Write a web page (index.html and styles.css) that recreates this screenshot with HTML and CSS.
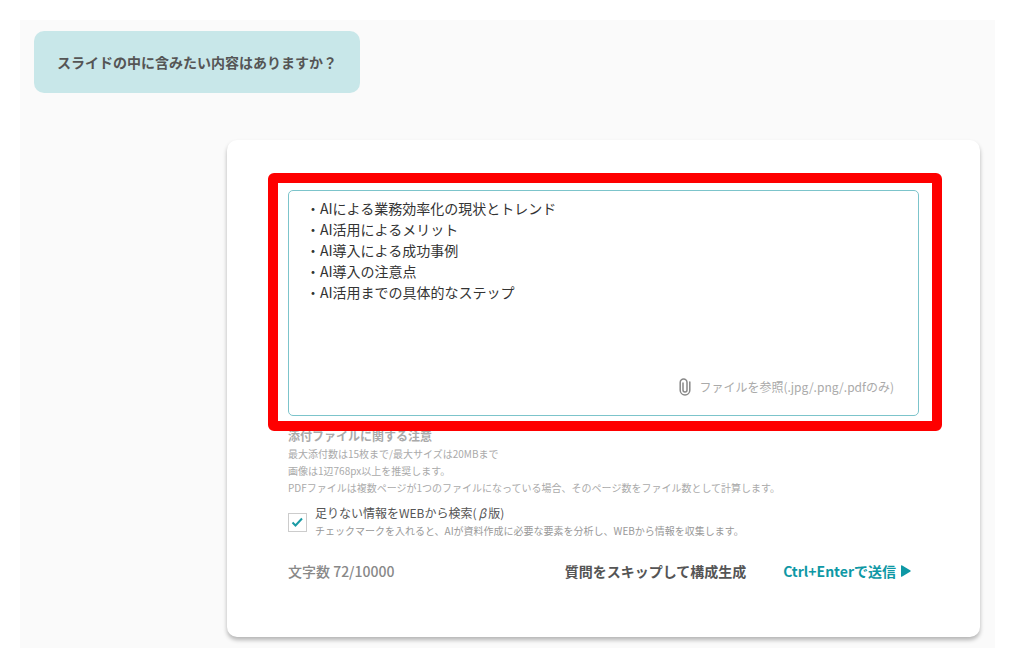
FILE: index.html
```
<!DOCTYPE html>
<html lang="ja">
<head>
  <meta charset="UTF-8">
  <meta name="viewport" content="width=device-width, initial-scale=1">
  <title>スライド構成</title>
  <link rel="stylesheet" href="styles.css">
</head>
<body>
  <main class="chat">
    <p class="bubble" id="question">スライドの中に含みたい内容はありますか？</p>
    <form class="card">
      <div class="field">
        <textarea class="answer" rows="5" aria-labelledby="question">・AIによる業務効率化の現状とトレンド
・AI活用によるメリット
・AI導入による成功事例
・AI導入の注意点
・AI活用までの具体的なステップ</textarea>
        <label class="file" for="file">
          <svg class="clip" width="12" height="18" viewBox="0 0 12 18" fill="none" stroke="currentColor" stroke-width="1.5" stroke-linecap="round">
            <path d="M10.8 4v8.2a4.8 4.8 0 0 1-9.6 0V4.4a3.4 3.4 0 0 1 6.8 0v7.6a2 2 0 0 1-4 0V5"/>
          </svg>
          <span>ファイルを参照(.jpg/.png/.pdfのみ)</span>
        </label>
        <input class="file-input" id="file" type="file" accept=".jpg,.png,.pdf" multiple>
        <div class="highlight"></div>
      </div>
      <div class="notes">
        <h2 class="notes-title">添付ファイルに関する注意</h2>
        <p>最大添付数は15枚まで/最大サイズは20MBまで</p>
        <p>画像は1辺768px以上を推奨します。</p>
        <p>PDFファイルは複数ページが1つのファイルになっている場合、そのページ数をファイル数として計算します。</p>
      </div>
      <div class="search">
        <input class="check" id="web-search" type="checkbox" checked>
        <label class="search-label" for="web-search">
          <span class="search-title">足りない情報をWEBから検索(<i class="beta">β</i>版)</span>
          <span class="search-help">チェックマークを入れると、AIが資料作成に必要な要素を分析し、WEBから情報を収集します。</span>
        </label>
      </div>
      <div class="footer">
        <span class="count">文字数 72/10000</span>
        <button class="btn" type="button">質問をスキップして構成生成</button>
        <button class="btn btn-send" type="submit">
          Ctrl+Enterで送信
          <svg width="10" height="12" viewBox="0 0 10 12" fill="currentColor"><path d="M0 0.8Q0 0 0.8 0.3L9.5 5.4Q10 6 9.5 6.6L0.8 11.7Q0 12 0 11.2Z"/></svg>
        </button>
      </div>
    </form>
  </main>
</body>
</html>
```

FILE: styles.css
```
* {
  box-sizing: border-box;
}
body {
  margin: 0;
  padding: 20px 29px 19px 20px;
  background: #fff;
  color: #555;
  font-family: "Noto Sans CJK JP", sans-serif;
  font-size: 14px;
}
p, h2 {
  margin: 0;
}
.chat {
  display: flex;
  flex-direction: column;
  align-items: flex-start;
  padding: 11px 15px 11px 14px;
  background: #fafafa;
}
.bubble {
  padding: 21px 23px;
  border-radius: 10px;
  background: #c8e7e9;
  line-height: 20px;
  font-weight: 700;
}
.card {
  align-self: stretch;
  margin: 47px 0 0 193px;
  padding: 50px 61px 56px;
  border-radius: 10px;
  background: #fff;
  box-shadow: 0 3px 4px rgba(0, 0, 0, 0.28);
}
.field {
  position: relative;
  display: flex;
  flex-direction: column;
  min-height: 226px;
  border: 1px solid #7cc4cb;
  border-radius: 5px;
}
.answer {
  flex: 1;
  width: 100%;
  padding: 7px 17px;
  border: 0;
  outline: 0;
  resize: none;
  background: none;
  color: #333;
  font: inherit;
  line-height: 21px;
}
.file {
  display: flex;
  align-items: center;
  align-self: flex-end;
  gap: 8px;
  padding: 0 24px 19px 0;
  color: #aaa;
  font-size: 12px;
  line-height: 18px;
  cursor: pointer;
}
.clip {
  color: #888;
}
.file-input {
  position: absolute;
  width: 1px;
  height: 1px;
  opacity: 0;
}
/* red frame drawn over the input area */
.highlight {
  position: absolute;
  inset: -18px -24px -16px -21px;
  border: 10px solid #fe0000;
  border-radius: 6px;
  pointer-events: none;
}
.notes {
  margin-top: 11px;
  color: #aaa;
  font-size: 10px;
  line-height: 17px;
}
.notes-title {
  font-size: 12px;
  line-height: 18px;
  font-weight: 700;
}
.search {
  display: flex;
  align-items: center;
  gap: 8px;
  margin-top: 8px;
}
.check {
  appearance: none;
  flex: none;
  width: 19px;
  height: 19px;
  margin: 0;
  border: 1px solid #ccc;
  background: #fff;
}
.check:checked {
  background: url("data:image/svg+xml,%3Csvg xmlns='http://www.w3.org/2000/svg' viewBox='0 0 17 17'%3E%3Cpath d='M3.5 8.5l3 3 6.5-7' fill='none' stroke='%231a9ba5' stroke-width='2'/%3E%3C/svg%3E") center / 17px no-repeat;
}
.search-label {
  display: flex;
  flex-direction: column;
  line-height: 18px;
}
.search-title {
  font-size: 12px;
}
.beta {
  padding: 0 2px;
}
.search-help {
  color: #999;
  font-size: 10px;
}
.footer {
  display: flex;
  align-items: center;
  gap: 37px;
  margin-top: 21px;
  padding-right: 8px;
  line-height: 20px;
}
.count {
  margin-right: auto;
  color: #888;
  font-weight: 500;
}
.btn {
  padding: 0;
  border: 0;
  background: none;
  color: #555;
  font: inherit;
  font-weight: 700;
  line-height: 20px;
  cursor: pointer;
}
.btn-send {
  display: flex;
  align-items: center;
  gap: 5px;
  color: #0e98a5;
}
```
